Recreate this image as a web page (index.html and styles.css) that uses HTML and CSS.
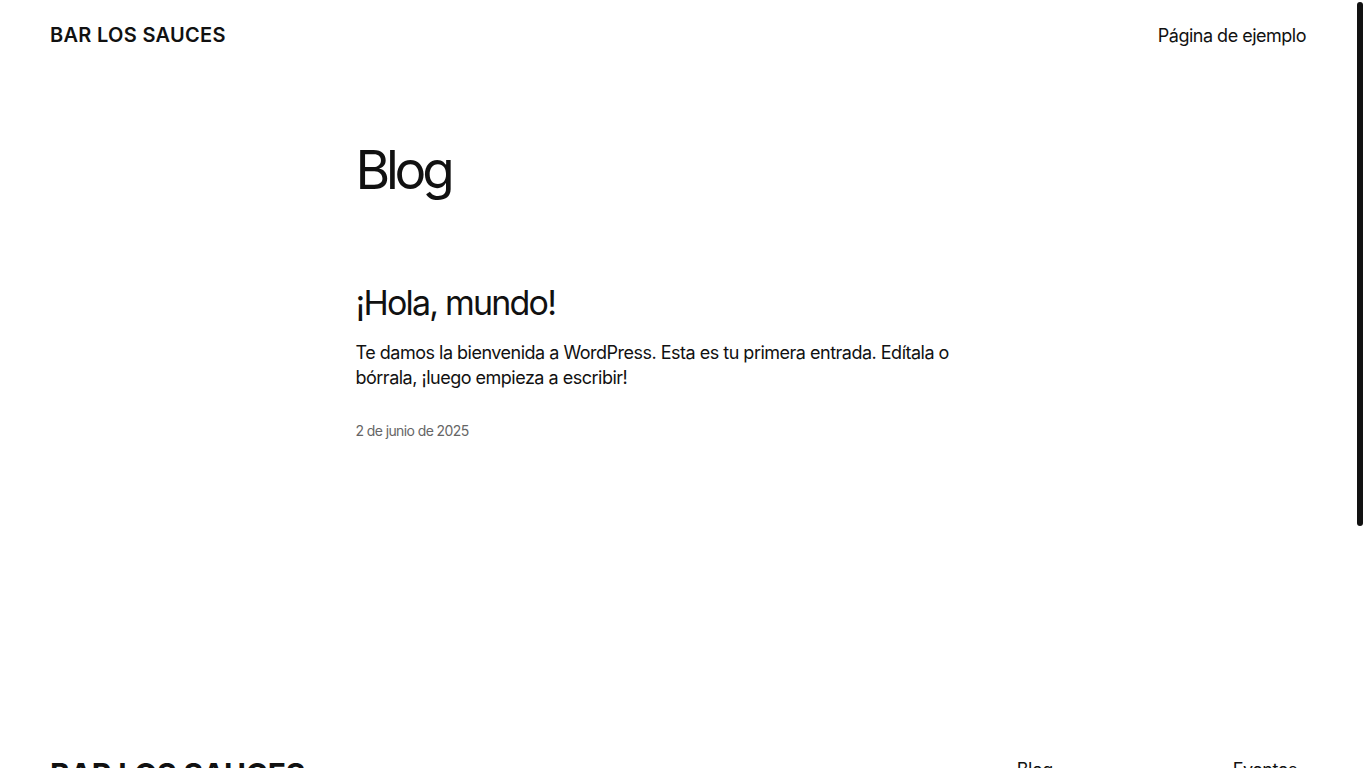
FILE: index.html
```html
<!DOCTYPE html>
<html lang="es">
<head>
<meta charset="utf-8">
<title>Bar Los Sauces</title>
<link rel="stylesheet" href="styles.css">
</head>
<body>
<div class="page">
  <header class="site-header">
    <a class="site-title" href="#">BAR LOS SAUCES</a>
    <nav class="main-nav"><a href="#">Página de ejemplo</a></nav>
  </header>
  <main class="content">
    <h1 class="page-title">Blog</h1>
    <article class="post">
      <h2 class="post-title">¡Hola, mundo!</h2>
      <p class="post-excerpt">Te damos la bienvenida a WordPress. Esta es tu primera entrada. Edítala o bórrala, ¡luego empieza a escribir!</p>
      <div class="post-date">2 de junio de 2025</div>
    </article>
  </main>
  <footer class="site-footer">
    <a class="footer-title" href="#">BAR LOS SAUCES</a>
    <div class="footer-links">
      <a href="#">Blog</a>
      <a href="#">Eventos</a>
    </div>
  </footer>
</div>
<div class="scrollbar"><div class="thumb"></div></div>
</body>
</html>
```
FILE: styles.css
```css
html, body {
  margin: 0;
  padding: 0;
  height: 100%;
  overflow: hidden;
  background: #fff;
}
body {
  font-family: Inter, "Noto Sans", sans-serif;
  color: #111;
}
a { color: inherit; text-decoration: none; }
.page {
  width: calc(100% - 10px);
}
.site-header {
  display: flex;
  justify-content: space-between;
  align-items: center;
  padding: 20px 50px 0;
  height: 30px;
}
.site-title {
  font-size: 20px;
  font-weight: 600;
  letter-spacing: 0.3px;
}
.main-nav a {
  font-size: 18px;
  font-weight: 400;
  letter-spacing: -0.5px;
}
.content {
  box-sizing: border-box;
  width: 645px;
  margin: 0 auto;
  padding-top: 89px;
  min-height: 706px;
}
.page-title {
  margin: 0;
  font-size: 53px;
  font-weight: 400;
  line-height: 1.2;
  letter-spacing: -4.2px;
}
.post {
  margin-top: 80px;
}
.post-title {
  margin: 0;
  font-size: 34px;
  font-weight: 400;
  line-height: 1.2;
  letter-spacing: -1.8px;
}
.post-excerpt {
  margin: 17px 0 0;
  font-size: 18px;
  line-height: 25px;
  letter-spacing: -0.5px;
}
.post-date {
  margin-top: 32px;
  font-size: 14px;
  line-height: 17px;
  color: #666;
  letter-spacing: -0.6px;
}
.site-footer {
  display: flex;
  justify-content: space-between;
  padding: 0 59px 0 50px;
}
.footer-title {
  font-size: 30px;
  font-weight: 700;
  line-height: 36px;
  letter-spacing: -0.2px;
}
.footer-links {
  display: flex;
  gap: 180px;
  padding-top: 3px;
  font-size: 18px;
  line-height: 22px;
  letter-spacing: -0.5px;
}
.scrollbar {
  position: fixed;
  top: 2px;
  right: 3px;
  width: 6px;
  height: 524px;
}
.thumb {
  width: 100%;
  height: 100%;
  background: #111;
  border-radius: 3px;
}
```
